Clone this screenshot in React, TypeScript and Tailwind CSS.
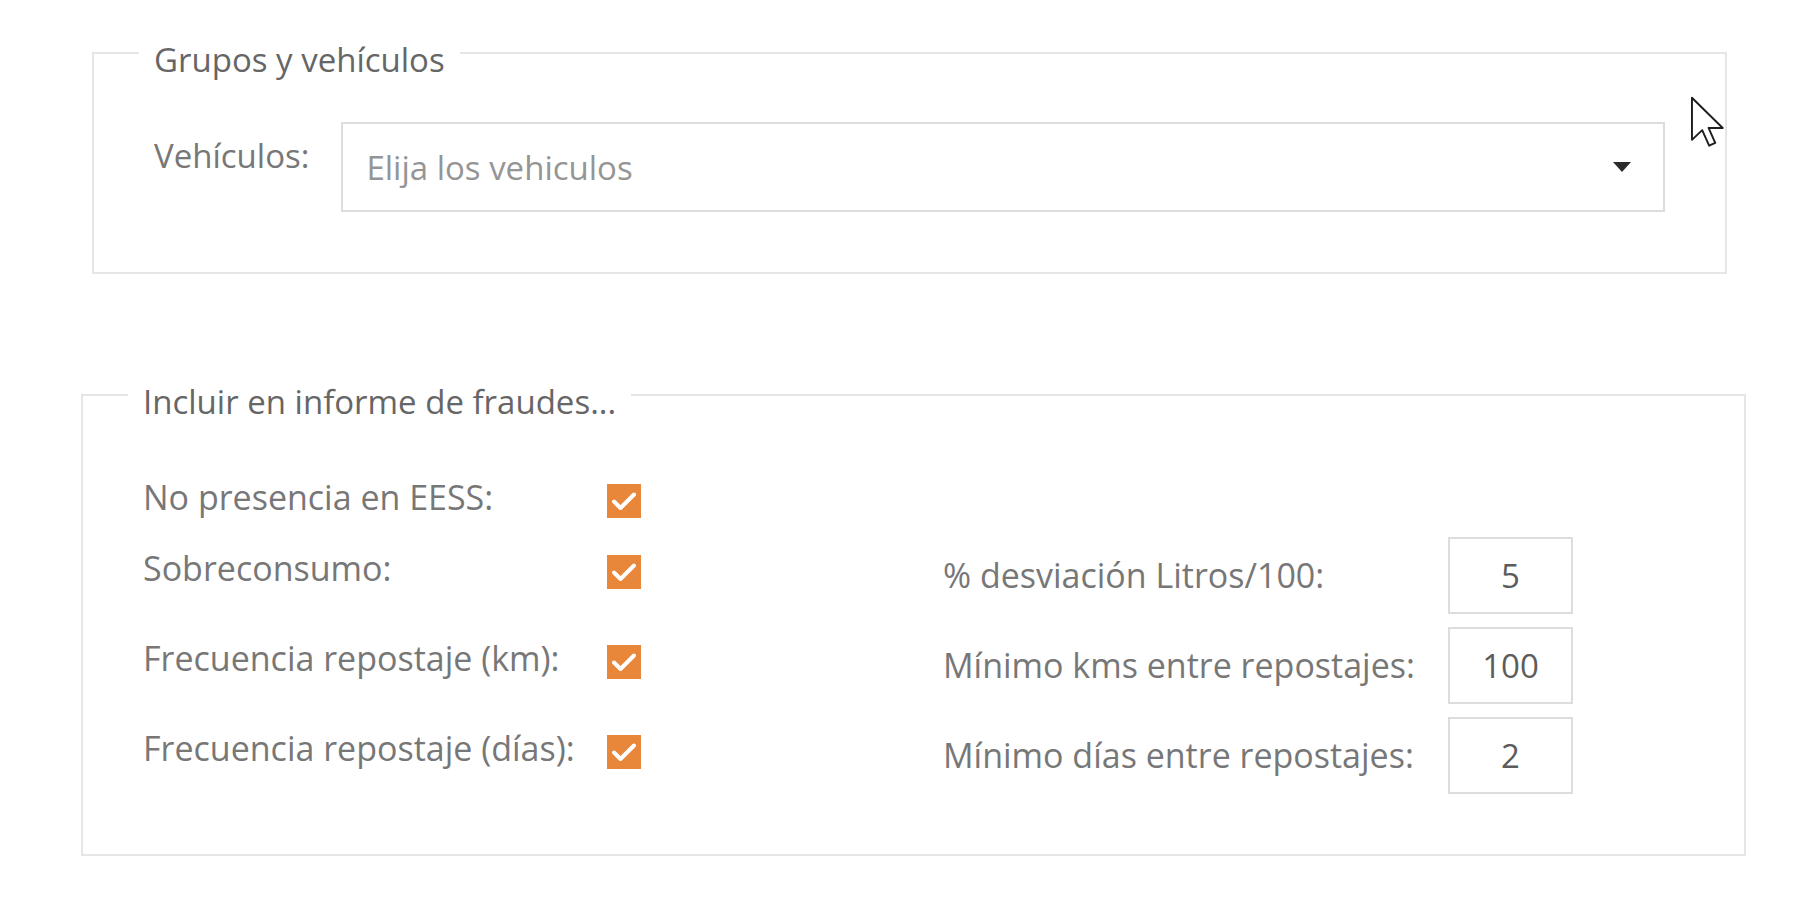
import React from "react";

type FraudRow = {
  label: string;
  right?: string;
  value?: string;
};

const rows: FraudRow[] = [
  { label: "No presencia en EESS:" },
  { label: "Sobreconsumo:", right: "% desviación Litros/100:", value: "5" },
  { label: "Frecuencia repostaje (km):", right: "Mínimo kms entre repostajes:", value: "100" },
  { label: "Frecuencia repostaje (días):", right: "Mínimo días entre repostajes:", value: "2" },
];

function Checkbox() {
  return (
    <span className="flex h-[34px] w-[34px] shrink-0 items-center justify-center bg-[#e8863a]">
      <svg viewBox="0 0 34 34" className="h-[34px] w-[34px]" fill="none" stroke="white" strokeWidth={4} strokeLinecap="round" strokeLinejoin="round">
        <path d="M7 17.5l6.5 6.5L27 10.5" />
      </svg>
    </span>
  );
}

function CheckItem({ label, shifted }: { label: string; shifted?: boolean }) {
  return (
    <div className={shifted ? "flex w-[498px] shrink-0 items-center pb-[8px]" : "flex w-[498px] shrink-0 items-center"}>
      <span className="w-[464px] pb-[6px] text-[34px] leading-[45px]">{label}</span>
      <Checkbox />
    </div>
  );
}

export default function App() {
  return (
    <div className="relative min-h-screen w-full bg-white pt-[23px] font-['Open_Sans',sans-serif] text-[33px] text-[#777777]">
      {/* Grupos y vehículos */}
      <fieldset className="ml-[92px] w-[1635px] border-2 border-[#e6e6e6] px-[60px] pt-[40px] pb-[60px]">
        <legend className="-ml-[15px] px-[15px] pt-[14px] leading-[45px] text-[#666666]">Grupos y vehículos</legend>
        <div className="flex items-start gap-[32px]">
          <span className="mt-[11px] leading-[45px]">Vehículos:</span>
          <div className="flex h-[90px] flex-1 items-center justify-between border-2 border-[#dddddd] pl-[23px] pr-[32px]">
            <span className="leading-[45px] text-[#959595]">Elija los vehiculos</span>
            <svg viewBox="0 0 18 10" className="h-[10px] w-[18px]">
              <polygon points="0,0 18,0 9,10" fill="#2b2b2b" />
            </svg>
          </div>
        </div>
      </fieldset>

      {/* Incluir en informe de fraudes */}
      <fieldset className="mt-[91px] ml-[81px] w-[1665px] border-2 border-[#e6e6e6] px-[60px] pt-[53px] pb-[60px]">
        <legend className="-ml-[15px] px-[15px] pt-[14px] leading-[45px] text-[#666666]">Incluir en informe de fraudes...</legend>
        <div className="flex flex-col gap-y-[13px]">
          {rows.map((r) =>
            r.right ? (
              <div key={r.label} className="flex h-[77px] items-center">
                <CheckItem label={r.label} shifted />
                <span className="ml-[302px] w-[505px] shrink-0 text-[34px] leading-[45px]">{r.right}</span>
                <div className="flex h-[77px] w-[125px] shrink-0 items-center justify-center border-2 border-[#dddddd] leading-[45px] text-[#5c5c5c]">
                  {r.value}
                </div>
              </div>
            ) : (
              <div key={r.label} className="flex h-[47px] items-center">
                <CheckItem label={r.label} />
              </div>
            )
          )}
        </div>
      </fieldset>

      {/* mouse pointer */}
      <svg className="pointer-events-none absolute left-[1689px] top-[95px] h-[54px] w-[35px]" viewBox="0 0 12.5 19.5">
        <path
          d="M1 1v15.2l3.7-3.5 2.5 5.6 2.2-1-2.4-5.4h5.1L1 1z"
          fill="white"
          stroke="#1e1e1e"
          strokeWidth={0.7}
          strokeLinejoin="round"
        />
      </svg>
    </div>
  );
}
